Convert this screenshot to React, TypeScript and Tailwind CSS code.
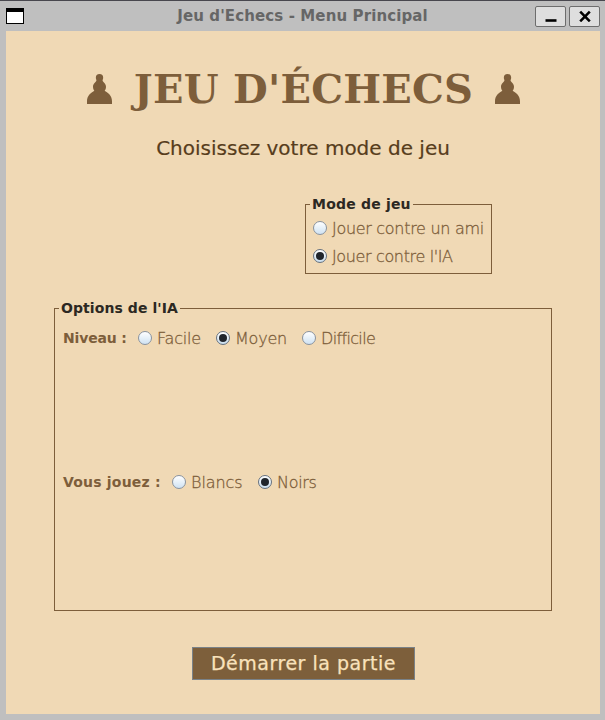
import { useState } from "react";

const sans = "font-['DejaVu_Sans',sans-serif]";

function Pawn() {
  return (
    <svg width="25" height="30" viewBox="0 0 75 90" className="shrink-0 fill-[#7d5e3b]" aria-hidden="true">
      <circle cx="37.5" cy="11" r="11" />
      <path d="M29 17C29 24 18 27 18 38c0 6 2 9 4 12C14 56 0 62 0 82v8h75v-8c0-20-14-26-22-32c2-3 4-6 4-12c0-11-11-14-11-21z" />
    </svg>
  );
}

function Radio({
  label,
  checked,
  onSelect,
  className,
  textClass,
}: {
  label: string;
  checked: boolean;
  onSelect: () => void;
  className?: string;
  textClass?: string;
}) {
  return (
    <button
      type="button"
      role="radio"
      aria-checked={checked}
      onClick={onSelect}
      className={`flex h-5 shrink-0 items-center gap-[5px] whitespace-nowrap text-[#7d5e3b] ${className ?? ""}`}
    >
      <span
        className={`flex size-[14px] shrink-0 items-center justify-center rounded-full border ${
          checked
            ? "border-[#65717f] bg-linear-to-b from-white to-[#c9dded]"
            : "border-[#8993a0] bg-linear-to-b from-white to-[#cfe2f2]"
        }`}
      >
        {checked && <span className="size-2 rounded-full bg-[#20252c]" />}
      </span>
      <span className={`pt-px text-[16px] leading-5 font-extralight [-webkit-text-stroke:0.3px_#7d5e3b] ${textClass ?? ""}`}>
        {label}
      </span>
    </button>
  );
}

export default function App() {
  const [mode, setMode] = useState("ia");
  const [level, setLevel] = useState("moyen");
  const [color, setColor] = useState("noirs");

  return (
    <div className={`h-[720px] w-[605px] overflow-hidden border-t border-[#48474e] bg-[#bfbfbf] ${sans}`}>
      <header className="flex h-[30px] items-center pr-[5px] pl-[6px]">
        <span className="h-4 w-[18px] shrink-0 border border-t-4 border-black bg-white" />
        <h1 className="flex-1 text-center text-[15px] leading-5 font-bold tracking-[0.11px] whitespace-nowrap text-[#666]">
          <span className="ml-[46px]">Jeu d'Echecs - Menu Principal</span>
        </h1>
        <div className="flex gap-[3px]">
          <button type="button" aria-label="Réduire" className="flex h-[21px] w-[31px] items-center justify-center rounded-[2px] border border-[#6d6d6d] bg-[#dedede]">
            <svg width="12" height="12" viewBox="0 0 12 12">
              <path d="M0.5 10.5h11" stroke="#000" strokeWidth="2.6" />
            </svg>
          </button>
          <button type="button" aria-label="Fermer" className="flex h-[21px] w-[31px] items-center justify-center rounded-[2px] border border-[#6d6d6d] bg-[#dedede]">
            <svg width="12" height="12" viewBox="0 0 12 12">
              <path d="M1.2 1.7l9.6 9.6M10.8 1.7l-9.6 9.6" stroke="#000" strokeWidth="2.6" />
            </svg>
          </button>
        </div>
      </header>

      <main className="ml-[6px] flex h-[683px] w-[594px] flex-col bg-[#f0d9b5]">
        <div className="mt-[34px] ml-[81px] flex h-12 w-[433px] items-center justify-between whitespace-nowrap text-[40px] leading-[48px] font-bold text-[#7d5e3b]">
          <Pawn />
          <span className="font-['DejaVu_Serif',serif] tracking-[0.25px]">JEU D'ÉCHECS</span>
          <Pawn />
        </div>
        <p className="mt-[21px] text-center text-[20px] leading-7 whitespace-nowrap text-[#573d1c] [-webkit-text-stroke:0.2px_#573d1c]">
          Choisissez votre mode de jeu
        </p>

        <fieldset className="mt-[33px] ml-[299px] h-[79px] w-[187px] border border-[#7d5e3b] pl-[7px]">
          <legend className="-ml-[3px] h-[18px] px-[2px] text-[14px] leading-[18px] font-bold tracking-[0.2px] whitespace-nowrap text-[#2c2822]">
            Mode de jeu
          </legend>
          <div role="radiogroup" className="mt-[5px] flex flex-col gap-2">
            <Radio label="Jouer contre un ami" textClass="tracking-[-0.3px]" checked={mode === "ami"} onSelect={() => setMode("ami")} />
            <Radio label="Jouer contre l'IA" textClass="tracking-[-0.36px]" checked={mode === "ia"} onSelect={() => setMode("ia")} />
          </div>
        </fieldset>

        <fieldset className="mt-[25px] ml-[48px] h-[312px] w-[498px] border border-[#7d5e3b] pl-2">
          <legend className="-ml-[4px] h-[18px] px-[2px] text-[14px] leading-[18px] font-bold tracking-[0.08px] whitespace-nowrap text-[#2c2822]">
            Options de l'IA
          </legend>
          <div role="radiogroup" className="mt-[11px] flex items-center">
            <span className="w-[75px] shrink-0 text-[14px] leading-5 font-bold tracking-[-0.15px] text-[#7d5e3b]">Niveau :</span>
            <Radio label="Facile" textClass="tracking-[-0.2px]" checked={level === "facile"} onSelect={() => setLevel("facile")} className="w-[78px]" />
            <Radio label="Moyen" textClass="tracking-[-0.2px]" checked={level === "moyen"} onSelect={() => setLevel("moyen")} className="w-[86px]" />
            <Radio label="Difficile" textClass="tracking-[-0.65px]" checked={level === "difficile"} onSelect={() => setLevel("difficile")} />
          </div>
          <div role="radiogroup" className="mt-[124px] flex items-center">
            <span className="w-[109px] shrink-0 text-[14px] leading-5 font-bold tracking-[0.2px] whitespace-nowrap text-[#7d5e3b]">
              Vous jouez :
            </span>
            <Radio label="Blancs" textClass="tracking-[-0.1px]" checked={color === "blancs"} onSelect={() => setColor("blancs")} className="w-[86px]" />
            <Radio label="Noirs" textClass="tracking-[-0.3px]" checked={color === "noirs"} onSelect={() => setColor("noirs")} />
          </div>
        </fieldset>

        <button
          type="button"
          className="mt-[36px] ml-[186px] h-[33px] w-[223px] border border-[#7a8288] bg-[#7d5f3b] pb-[2px] text-[19px] leading-[28px] tracking-[0.52px] whitespace-nowrap text-[#f9e2bb] [-webkit-text-stroke:0.25px_#f9e2bb]"
        >
          Démarrer la partie
        </button>
      </main>
    </div>
  );
}
